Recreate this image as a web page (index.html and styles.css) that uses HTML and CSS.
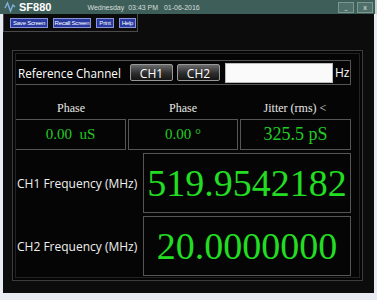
FILE: index.html
```html
<!DOCTYPE html>
<html lang="en">
<head>
  <meta charset="UTF-8">
  <title>SF880</title>
  <link rel="stylesheet" href="styles.css">
</head>
<body>
  <header class="titlebar">
    <svg class="app-icon" width="12" height="12" viewBox="0 0 12 12">
      <path d="M1 7 L3.5 2 L6.5 10 L9 4 L11 6" fill="none" stroke="#7fb0e0" stroke-width="1.4"/>
    </svg>
    <span class="app-name">SF880</span>
    <span class="clock">Wednesday&nbsp; 03:43 PM&nbsp;&nbsp; 01-06-2016</span>
    <div class="win-btns">
      <span class="win-btn">_</span>
      <span class="win-btn">x</span>
    </div>
  </header>

  <div class="window">
    <div class="toolbar">
      <button class="tool-btn save">Save Screen</button>
      <button class="tool-btn recall">Recall Screen</button>
      <button class="tool-btn print">Print</button>
      <button class="tool-btn help">Help</button>
    </div>

    <div class="panel">
      <div class="ref-row">
        <span class="ref-label">Reference Channel</span>
        <button class="ch-btn">CH1</button>
        <button class="ch-btn">CH2</button>
        <input class="hz-input" type="text">
        <span class="hz">Hz</span>
      </div>

      <div class="heads">
        <div>Phase</div>
        <div>Phase</div>
        <div>Jitter (rms) &lt;</div>
      </div>

      <div class="values">
        <div class="val">0.00&nbsp; uS</div>
        <div class="val">0.00 &deg;</div>
        <div class="val big">325.5 pS</div>
      </div>

      <div class="freq-row">
        <div class="freq-label">CH1 Frequency (MHz)</div>
        <div class="freq-box">519.9542182</div>
      </div>
      <div class="freq-row">
        <div class="freq-label">CH2 Frequency (MHz)</div>
        <div class="freq-box">20.0000000</div>
      </div>
    </div>
  </div>
</body>
</html>
```

FILE: styles.css
```css
body {
  margin: 0;
  background-color: #e9ebf3;
  font-family: "Open Sans", "Noto Sans", Arial, sans-serif;
  width: 377px;
  height: 300px;
  overflow: hidden;
}

.titlebar {
  height: 14px;
  background-color: #3e5f59;
  display: flex;
  align-items: center;
  color: #fff;
  border-right: 2px solid #c8d0d0;
}

.app-icon {
  margin-left: 4px;
}

.app-name {
  margin-left: 3px;
  font-family: "Liberation Sans", Arial, sans-serif;
  font-weight: bold;
  font-size: 11px;
}

.clock {
  margin-left: 36px;
  font-family: "Liberation Sans", Arial, sans-serif;
  font-size: 7px;
  color: #d6dedb;
}

.win-btns {
  margin-left: auto;
  display: flex;
  gap: 3px;
  margin-right: 2px;
}

.win-btn {
  width: 16px;
  height: 11px;
  background-color: #4f706a;
  border: 1px solid #7c9690;
  font-size: 7px;
  line-height: 10px;
  text-align: center;
  color: #e0e8e6;
  box-sizing: border-box;
}

.window {
  margin: 0 3px;
  height: 279px;
  background-color: #0c0c0c;
  overflow: hidden;
}

.toolbar {
  width: 135px;
  height: 18px;
  box-sizing: border-box;
  border: 1px solid #4a4a4a;
  border-top: none;
  display: flex;
  align-items: center;
  gap: 5px;
  padding-left: 6px;
}

.tool-btn {
  background-color: #2a3aa0;
  border: 1px solid #8a96d8;
  color: #fff;
  font-family: "Liberation Sans", Arial, sans-serif;
  font-size: 6px;
  letter-spacing: -0.2px;
  line-height: 8px;
  height: 10px;
  padding: 0;
  white-space: nowrap;
  overflow: hidden;
}

.tool-btn.save { width: 38px; }
.tool-btn.recall { width: 38px; }
.tool-btn.print { width: 18px; }
.tool-btn.help { width: 17px; }

.panel {
  margin: 18px 0 0 9px;
  width: 351px;
  height: 231px;
  box-sizing: border-box;
  border: 1px solid #3c3c3c;
  outline: 1px solid #222;
  outline-offset: -4px;
  background-color: #050505;
  padding: 9px 11px 0 2px;
}

.ref-row {
  height: 25px;
  box-sizing: border-box;
  border: 1px solid #555;
  display: flex;
  align-items: center;
  padding-left: 2px;
  color: #fff;
}

.ref-label {
  font-size: 11.7px;
  width: 112px;
  white-space: nowrap;
}

.ch-btn {
  width: 43px;
  height: 17px;
  margin-right: 4px;
  background: linear-gradient(#6a6a6a, #2e2e2e 55%, #151515);
  border: 1px solid #999;
  border-radius: 2px;
  color: #fff;
  font-family: "Open Sans", Arial, sans-serif;
  font-size: 12px;
  padding: 0;
}

.hz-input {
  width: 108px;
  height: 20px;
  box-sizing: border-box;
  border: 1px solid #bbb;
  background-color: #fafafa;
  margin-left: 1px;
}

.hz {
  font-size: 12px;
  margin-left: 2px;
}

.heads {
  display: grid;
  grid-template-columns: 1fr 1fr 1fr;
  margin-top: 16px;
  height: 18px;
  font-family: "Liberation Serif", "Times New Roman", serif;
  font-size: 12px;
  color: #e8e8e8;
  text-align: center;
}

.values {
  display: grid;
  grid-template-columns: 111px 110px 111px;
  gap: 2px;
  height: 31px;
}

.val {
  border: 1px solid #555;
  color: #22cc22;
  font-family: "Liberation Serif", "Times New Roman", serif;
  font-size: 15px;
  display: flex;
  align-items: center;
  justify-content: center;
}

.val.big {
  font-size: 18px;
}

.freq-row {
  display: flex;
  height: 60px;
  margin-top: 3px;
}

.freq-label {
  width: 128px;
  flex-shrink: 0;
  display: flex;
  align-items: center;
  padding-left: 2px;
  box-sizing: border-box;
  color: #f0f0f0;
  font-size: 12px;
  white-space: nowrap;
}

.freq-box {
  flex: 1;
  min-width: 0;
  overflow: hidden;
  white-space: nowrap;
  border: 1px solid #555;
  color: #22dd22;
  font-family: "Liberation Serif", "Times New Roman", serif;
  font-size: 38px;
  display: flex;
  align-items: center;
  justify-content: center;
}
```
